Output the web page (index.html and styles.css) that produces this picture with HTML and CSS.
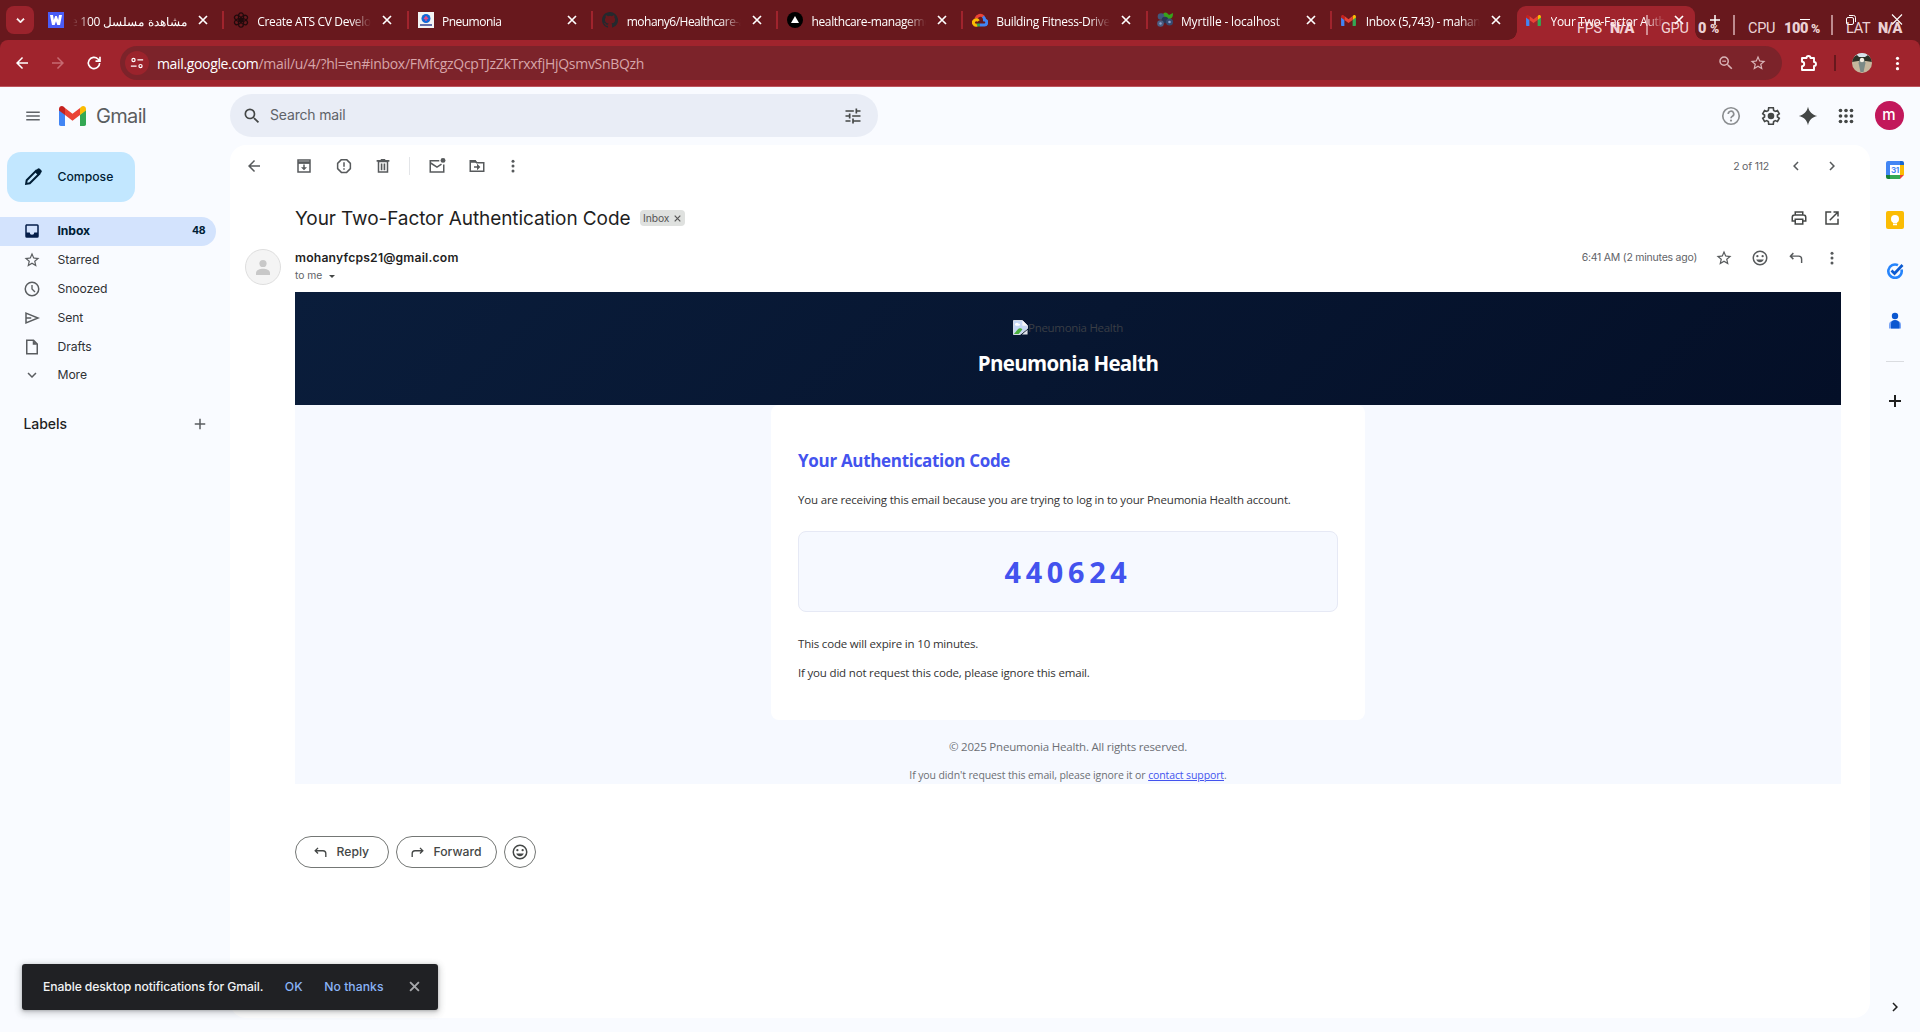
FILE: index.html
```html
<!DOCTYPE html>
<html lang="en">
<head>
<meta charset="utf-8">
<title>Your Two-Factor Authentication Code</title>
<link rel="stylesheet" href="styles.css">
</head>
<body>
<svg class="defs" width="0" height="0">
  <symbol id="close" viewBox="0 0 10 10"><path d="M1 1l8 8M9 1L1 9" fill="none" stroke="currentColor" stroke-width="1.7"/></symbol>
  <symbol id="back" viewBox="0 0 24 24"><path d="M20 11H7.83l5.59-5.59L12 4l-8 8 8 8 1.41-1.41L7.83 13H20v-2z"/></symbol>
  <symbol id="down" viewBox="0 0 24 24"><path d="M7.41 8.59L12 13.17l4.59-4.58L18 10l-6 6-6-6z"/></symbol>
  <symbol id="left" viewBox="0 0 24 24"><path d="M15.41 7.41L14 6l-6 6 6 6 1.41-1.41L10.83 12z"/></symbol>
  <symbol id="right" viewBox="0 0 24 24"><path d="M8.59 16.59L13.17 12 8.59 7.41 10 6l6 6-6 6z"/></symbol>
  <symbol id="plus" viewBox="0 0 24 24"><path d="M19 13h-6v6h-2v-6H5v-2h6V5h2v6h6z"/></symbol>
  <symbol id="dots" viewBox="0 0 24 24"><circle cx="12" cy="5.5" r="2"/><circle cx="12" cy="12" r="2"/><circle cx="12" cy="18.5" r="2"/></symbol>
  <symbol id="star" viewBox="0 0 24 24"><path d="M22 9.24l-7.19-.62L12 2 9.19 8.63 2 9.24l5.46 4.73L5.82 21 12 17.27 18.18 21l-1.63-7.03L22 9.24zM12 15.4l-3.76 2.27 1-4.28-3.32-2.88 4.38-.38L12 6.1l1.71 4.04 4.38.38-3.32 2.88 1 4.28L12 15.4z"/></symbol>
  <symbol id="search" viewBox="0 0 24 24"><path d="M15.5 14h-.79l-.28-.27A6.47 6.47 0 0 0 16 9.5 6.5 6.5 0 1 0 9.5 16c1.61 0 3.09-.59 4.23-1.57l.27.28v.79l5 4.99L20.49 19l-4.99-5zm-6 0C7.01 14 5 11.99 5 9.5S7.01 5 9.5 5 14 7.01 14 9.5 11.99 14 9.5 14z"/></symbol>
  <symbol id="smile" viewBox="0 0 24 24"><circle cx="12" cy="12" r="9" fill="none" stroke="currentColor" stroke-width="2"/><circle cx="8.5" cy="9.5" r="1.5"/><circle cx="15.5" cy="9.5" r="1.5"/><path d="M6.9 14h10.2c-.8 2-2.8 3.5-5.1 3.5S7.7 16 6.9 14z"/></symbol>
  <symbol id="reply" viewBox="0 0 24 24"><path d="M8.500 5.500L4.500 9.500l4 4M5 9.500h10.500a4 4 0 0 1 4 4V18.500" fill="none" stroke="currentColor" stroke-width="1.900"/></symbol>
  <symbol id="gmail" viewBox="0 0 54 40"><path d="M0 7v29.500C0 38.500 1.500 40 3.500 40H12V17z" fill="#4285f4"/><path d="M42 40h8.500c2 0 3.500-1.500 3.500-3.500V7L42 17z" fill="#34a853"/><path d="M42 4v14l12-9V6c0-5-5.500-7.500-9.500-4.500z" fill="#fbbc04"/><path d="M12 18V4l15 11.500L42 4v14L27 29.500z" fill="#ea4335"/><path d="M0 6v3l12 9V4L9.500 1.500C5.500-1.500 0 1 0 6z" fill="#c5221f"/></symbol>
</svg>

<div class="tabstrip">
  <span class="tab-search"><svg class="i14"><use href="#down"/></svg></span>
  <div class="tab"><svg class="fav" viewBox="0 0 16 16"><path d="M0 0h16v16H0z" fill="#4a5cf5"/><path d="M2 3h3l.8 5L7.200 4h1.600l1.400 4 .8-5h3l-2 10H9.300L8 9.200 6.700 13H4z" fill="#fff"/></svg><span class="title rtl" dir="rtl">مشاهدة مسلسل The 100</span><svg class="x"><use href="#close"/></svg></div>
  <div class="tab"><svg class="fav" viewBox="0 0 16 16"><g fill="none" stroke="#210a0c" stroke-width="1.200"><ellipse cx="8" cy="4.800" rx="2.600" ry="4"/><ellipse cx="8" cy="4.800" rx="2.600" ry="4" transform="rotate(60 8 8)"/><ellipse cx="8" cy="4.800" rx="2.600" ry="4" transform="rotate(120 8 8)"/><ellipse cx="8" cy="4.800" rx="2.600" ry="4" transform="rotate(180 8 8)"/><ellipse cx="8" cy="4.800" rx="2.600" ry="4" transform="rotate(240 8 8)"/><ellipse cx="8" cy="4.800" rx="2.600" ry="4" transform="rotate(300 8 8)"/></g></svg><span class="title">Create ATS CV Developer</span><svg class="x"><use href="#close"/></svg></div>
  <div class="tab"><svg class="fav" viewBox="0 0 16 16"><path d="M0 0h16v16H0z" fill="#f3f3f3"/><circle cx="8" cy="6.500" r="4.500" fill="#1268d8"/><path d="M8 4v5M6 7l2-2 2 2" stroke="#e54b8a" fill="none" stroke-width="1.400"/><path d="M2 13h12" stroke="#26368b" stroke-width="1.400"/></svg><span class="title tight">Pneumonia</span><svg class="x"><use href="#close"/></svg></div>
  <div class="tab"><svg class="fav" viewBox="0 0 16 16"><path fill="#24292e" d="M8 0C3.580 0 0 3.580 0 8c0 3.540 2.290 6.530 5.470 7.590.4.070.55-.17.55-.38v-1.490c-2.010.37-2.530-.49-2.690-.94-.09-.23-.48-.94-.82-1.130-.28-.15-.68-.52-.01-.53.63-.01 1.080.58 1.230.82.72 1.210 1.870.87 2.330.66.070-.52.28-.87.51-1.070-1.780-.2-3.640-.89-3.640-3.950 0-.87.31-1.590.82-2.150-.08-.2-.36-1.020.08-2.120 0 0 .67-.21 2.200.82a7.500 7.500 0 0 1 4 0c1.530-1.040 2.200-.82 2.200-.82.44 1.100.16 1.920.08 2.120.51.56.82 1.270.82 2.150 0 3.070-1.870 3.750-3.650 3.950.29.25.54.73.54 1.480v2.200c0 .21.15.46.55.38A8 8 0 0 0 8 0z"/></svg><span class="title tight">mohany6/Healthcare-app</span><svg class="x"><use href="#close"/></svg></div>
  <div class="tab"><svg class="fav" viewBox="0 0 16 16"><circle cx="8" cy="8" r="8" fill="#000"/><path d="M8 4l4 7H4z" fill="#fff"/></svg><span class="title snug">healthcare-management</span><svg class="x"><use href="#close"/></svg></div>
  <div class="tab"><svg class="fav" viewBox="0 0 16 16" fill="none" stroke-width="3"><path d="M4 6.500a4.500 4.500 0 0 1 7.500-1.800" stroke="#ea4335"/><path d="M11 4.500a4.500 4.500 0 0 1 1.500 3.500 2.500 2.500 0 0 1-.5 5H8" stroke="#4285f4"/><path d="M8 13H4.500" stroke="#34a853"/><path d="M5 13a2.600 2.600 0 0 1-2.500-4.500c1-1 3-1 4 .5" stroke="#fbbc04"/></svg><span class="title">Building Fitness-Driven</span><svg class="x"><use href="#close"/></svg></div>
  <div class="tab"><svg class="fav" viewBox="0 0 16 16"><path d="M6 3c0-3 3-3 4-2l2 2 4-2c0 4-1 6-5 6-3 0-5-1-5-4z" fill="#37a31b"/><circle cx="4" cy="4.500" r="3.300" fill="#40587c"/><circle cx="8" cy="8" r="3.300" fill="#293757"/><circle cx="3.500" cy="11.500" r="3.300" fill="#4b5e82"/><circle cx="12.500" cy="10" r="3.500" fill="#364a70"/><circle cx="12.500" cy="10" r="1.300" fill="#8ba2cc"/><circle cx="3.500" cy="11.500" r="1.200" fill="#8ba2cc"/></svg><span class="title loose">Myrtille - localhost</span><svg class="x"><use href="#close"/></svg></div>
  <div class="tab last"><svg class="fav mail"><use href="#gmail"/></svg><span class="title">Inbox (5,743) - mahanyy</span><svg class="x"><use href="#close"/></svg></div>
  <div class="tab active"><svg class="fav mail"><use href="#gmail"/></svg><span class="title">Your Two-Factor Authentic</span><svg class="x"><use href="#close"/></svg></div>
  <svg class="newtab" viewBox="0 0 12 12"><path d="M6 1v10M1 6h10" stroke="#fff" stroke-width="1.500"/></svg>
  <div class="winctl">
    <svg viewBox="0 0 12 12"><path d="M1 5.500h10" stroke="#fff"/></svg>
    <svg viewBox="0 0 12 12" fill="none" stroke="#fff"><rect x="1.500" y="3.500" width="7" height="7" rx="1.500"/><path d="M4 1.500h4.500a2 2 0 0 1 2 2V8"/></svg>
    <svg viewBox="0 0 12 12"><path d="M1 .5l10 10M11 .5l-10 10" stroke="#fff" stroke-width="1.100"/></svg>
  </div>
</div>

<div class="toolbar">
  <svg class="nav-b"><use href="#back"/></svg>
  <svg class="nav-b fwd"><use href="#back"/></svg>
  <svg class="nav-b" viewBox="0 0 24 24"><path d="M19.500 12a7.500 7.500 0 1 1-2.200-5.300L20 9.300M20 3.500v6h-6" fill="none" stroke="currentColor" stroke-width="2.200"/></svg>
  <div class="omnibox">
    <span class="site"><svg viewBox="0 0 16 16" fill="none" stroke="#fff" stroke-width="1.400"><circle cx="4" cy="4.500" r="1.800"/><path d="M8.500 4.500H15M1 11.500h6.500"/><circle cx="12" cy="11.500" r="1.800"/></svg></span>
    <span class="url"><b>mail.google.com</b>/mail/u/4/?hl=en#inbox/FMfcgzQcpTJzZkTrxxfjHjQsmvSnBQzh</span>
    <svg class="o-ic" viewBox="0 0 24 24"><use href="#search"/><path d="M7 8.800h5v1.600H7z"/></svg>
    <svg class="o-ic"><use href="#star"/></svg>
  </div>
  <svg class="ext" viewBox="0 0 18 18"><path d="M2 4h4.500a2 2 0 0 1 4 0H14v4a2 2 0 0 1 0 4v4H2v-3.800a2.200 2.200 0 0 0 0-4.400z" fill="none" stroke="#fff" stroke-width="1.900" stroke-linejoin="round"/></svg>
  <span class="tdiv"></span>
  <svg class="photo" viewBox="0 0 20 20"><clipPath id="ph"><circle cx="10" cy="10" r="10"/></clipPath><g clip-path="url(#ph)"><path d="M0 0h20v20H0z" fill="#c5b79d"/><path d="M0 0h20v4H0z" fill="#d7e2ea"/><path d="M0 4l5-2 2 2h6l3-2 4 2v5l-6-1H6L0 9z" fill="#2c3026"/><path d="M8 6h4l1.500 4-2 9h-3l-2-9z" fill="#7b8a86"/><circle cx="10" cy="7" r="2.200" fill="#f4efe2"/></g></svg>
  <svg class="menu3"><use href="#dots"/></svg>
</div>

<div class="page">
  <header class="header">
    <div class="brand">
      <svg class="burger" viewBox="0 0 24 24"><path d="M3 18h18v-2H3v2zm0-5h18v-2H3v2zm0-7v2h18V6H3z"/></svg>
      <svg class="logo"><use href="#gmail"/></svg>
      <span>Gmail</span>
    </div>
    <div class="searchbox">
      <svg><use href="#search"/></svg><span>Search mail</span>
      <svg viewBox="0 0 24 24"><path d="M3 17v2h6v-2H3zM3 5v2h10V5H3zm10 16v-2h8v-2h-8v-2h-2v6h2zM7 9v2H3v2h4v2h2V9H7zm14 4v-2H11v2h10zm-6-4h2V7h4V5h-4V3h-2v6z"/></svg>
    </div>
    <div class="actions">
      <span class="c40"><svg class="i22 dim" viewBox="0 0 24 24"><circle cx="12" cy="12" r="9" fill="none" stroke="currentColor" stroke-width="1.800"/><path d="M9 9.800a3 3 0 1 1 4.500 2.500c-1 .6-1.500 1.200-1.500 2.200" fill="none" stroke="currentColor" stroke-width="1.800"/><circle cx="12" cy="17" r="1.200"/></svg></span>
      <span class="c40"><svg class="i22" viewBox="0 0 24 24"><path fill="none" stroke="currentColor" stroke-width="1.800" d="M19 13c.04-.32.070-.64.070-1s-.03-.66-.07-1l2-1.500-2-3.500-2.400 1c-.52-.4-1.080-.73-1.690-.98L14.500 3h-5l-.4 3c-.61.25-1.170.59-1.690.98L5 6 3 9.500 5 11c-.04.32-.07.65-.07 1s.03.660.07 1l-2 1.500L5 18l2.400-1c.52.4 1.080.73 1.690.98l.4 3h5l.4-3c.61-.25 1.170-.59 1.690-.98L19 18l2-3.500z"/><circle cx="12" cy="12" r="3.600"/></svg></span>
      <span class="c34"><svg class="i22" viewBox="0 0 24 24"><path d="M12 2c1.200 5.500 4.500 8.800 10 10-5.500 1.200-8.800 4.500-10 10C10.800 16.500 7.500 13.200 2 12c5.500-1.200 8.800-4.500 10-10z"/></svg></span>
      <span class="c42"><svg class="i22" viewBox="0 0 24 24"><g id="dotrow"><circle cx="6" cy="6" r="2"/><circle cx="12" cy="6" r="2"/><circle cx="18" cy="6" r="2"/></g><use href="#dotrow" y="6"/><use href="#dotrow" y="12"/></svg></span>
      <span class="avatar">m</span>
    </div>
  </header>

  <div class="body">
    <aside class="sidebar">
      <div class="compose"><svg viewBox="0 0 24 24"><path d="M4.500 19.500l.6-4L15.500 5 19 8.500 8.500 18.900z" fill="none" stroke="currentColor" stroke-width="2.200"/><path d="M14 6.500L17 3c.8-.8 1.700-.7 2.400 0L21 4.600c.8.8.8 1.700 0 2.400l-3.300 3.300z"/></svg>Compose</div>
      <nav>
        <div class="item sel"><svg viewBox="0 0 24 24"><path fill-rule="evenodd" d="M5 3h14a2 2 0 0 1 2 2v14a2 2 0 0 1-2 2H5a2 2 0 0 1-2-2V5c0-1.100.9-2 2-2zm0 2v9h4a3 3 0 0 0 6 0h4V5z"/></svg><span>Inbox</span><em>48</em></div>
        <div class="item"><svg><use href="#star"/></svg>Starred</div>
        <div class="item"><svg viewBox="0 0 24 24"><circle cx="12" cy="12" r="9" fill="none" stroke="currentColor" stroke-width="2"/><path d="M12 6.500V12l4 4" fill="none" stroke="currentColor" stroke-width="1.800"/></svg>Snoozed</div>
        <div class="item"><svg viewBox="0 0 24 24"><path d="M4 5.500L20 12 4 18.500zM4 12h7" fill="none" stroke="currentColor" stroke-width="2"/></svg>Sent</div>
        <div class="item"><svg viewBox="0 0 24 24"><path d="M5 3h9l5 5v13H5z" fill="none" stroke="currentColor" stroke-width="2"/><path d="M13 3v6h6z"/></svg>Drafts</div>
        <div class="item more"><svg><use href="#down"/></svg>More</div>
      </nav>
      <div class="labels"><span>Labels</span><svg><use href="#plus"/></svg></div>
    </aside>

    <main class="panel">
      <div class="tools">
        <span class="c40 t-back"><svg class="i18"><use href="#back"/></svg></span>
        <span class="c40"><svg class="i18" viewBox="0 0 24 24"><path d="M4 8v12h16V8M4 8V4h16v4z" fill="none" stroke="currentColor" stroke-width="2"/><path d="M4 5.500h16V8.500H4zM11 10h2v3.500h3L12 17.500l-4-4h3z"/></svg></span>
        <span class="c40"><svg class="i18" viewBox="0 0 24 24"><path d="M8.500 3.500h7l5 5v7l-5 5h-7l-5-5v-7z" fill="none" stroke="currentColor" stroke-width="2" stroke-linejoin="round"/><path d="M11 7h2v6h-2zM11 15h2v2h-2z"/></svg></span>
        <span class="c38"><svg class="i18" viewBox="0 0 24 24"><path d="M6 6h12v14H6z" fill="none" stroke="currentColor" stroke-width="2"/><path d="M3.500 4H8.500l1-1.500h5l1 1.500h5v2.200h-17zM9 8.500h2.200v9H9zM12.800 8.500H15v9h-2.200z"/></svg></span>
        <span class="tools-div"></span>
        <span class="c42"><svg class="i18" viewBox="0 0 24 24"><path d="M15 5H3v15h18V10" fill="none" stroke="currentColor" stroke-width="2"/><path d="M3.500 8L12 13.500 18 9.500" fill="none" stroke="currentColor" stroke-width="2"/><circle cx="20" cy="4.500" r="3.300"/></svg></span>
        <span class="c38"><svg class="i18" viewBox="0 0 24 24"><path d="M3 5h6.500l2 2.500H21V19H3z" fill="none" stroke="currentColor" stroke-width="2"/><path d="M3 4h7l2 3.500H3zM8 12.200h4V9l4.500 4.200L12 17.500v-3.200H8z"/></svg></span>
        <span class="c34"><svg class="i18"><use href="#dots"/></svg></span>
        <span class="count">2 of 112</span>
        <span class="c36"><svg class="i18"><use href="#left"/></svg></span>
        <span class="c36"><svg class="i18"><use href="#right"/></svg></span>
      </div>
      <div class="subject">
        <h2>Your Two-Factor Authentication Code</h2>
        <span class="chip">Inbox<svg><use href="#close"/></svg></span>
        <span class="c36 push"><svg class="i18" viewBox="0 0 24 24"><path d="M7 8V4h10v4M7 16H3V11q0-3 3-3h12q3 0 3 3v5h-4M7 13.500h10V20H7z" fill="none" stroke="currentColor" stroke-width="2"/></svg></span>
        <span class="c36"><svg class="i18" viewBox="0 0 24 24"><path d="M11 4H4v16h16v-7M14 4h6v6M20 4L9 15" fill="none" stroke="currentColor" stroke-width="2"/></svg></span>
      </div>
      <div class="sender">
        <svg class="face" viewBox="0 0 36 36"><circle cx="18" cy="18" r="17.500" fill="#f4f4f4" stroke="#dedede"/><circle cx="18" cy="14.500" r="3.600" fill="#c8c8c8"/><path d="M11 26v-2c0-3 4-4.300 7-4.300s7 1.300 7 4.300v2z" fill="#c8c8c8"/></svg>
        <div class="from"><strong>mohanyfcps21@gmail.com</strong><span>to me<i></i></span></div>
        <div class="meta">
          <span class="time">6:41 AM (2 minutes ago)</span>
          <span class="c36"><svg class="i18"><use href="#star"/></svg></span>
          <span class="c36"><svg class="i18"><use href="#smile"/></svg></span>
          <span class="c36"><svg class="i18"><use href="#reply"/></svg></span>
          <span class="c36"><svg class="i18"><use href="#dots"/></svg></span>
        </div>
      </div>

      <article class="email">
        <div class="banner">
          <div class="alt"><svg viewBox="0 0 16 16"><path d="M.5.5H10l5.500 5.500V9l-8 6.500h-7z" fill="#c6d8f5" stroke="#dfe3ea"/><path d="M10 .5V6h5.500z" fill="#f7f7f7"/><path d="M2 5c0-2 3-3 4-1 2 0 2 2 0 2H3z" fill="#fff"/><path d="M1 15l4-5c2-2 4-1 5 0l-4 5z" fill="#4caf3c"/><path d="M15.500 10.500v5h-6z" fill="#dfe3ea"/></svg>Pneumonia Health</div>
          <h1>Pneumonia Health</h1>
        </div>
        <div class="card">
          <h3>Your Authentication Code</h3>
          <p>You are receiving this email because you are trying to log in to your Pneumonia Health account.</p>
          <div class="code">440624</div>
          <p>This code will expire in 10 minutes.</p>
          <p>If you did not request this code, please ignore this email.</p>
        </div>
        <footer>
          <p>© 2025 Pneumonia Health. All rights reserved.</p>
          <p class="small">If you didn't request this email, please ignore it or <a>contact support</a>.</p>
        </footer>
      </article>

      <div class="replies">
        <span class="pill"><svg><use href="#reply"/></svg>Reply</span>
        <span class="pill fw"><svg class="flip"><use href="#reply"/></svg>Forward</span>
        <span class="round"><svg><use href="#smile"/></svg></span>
      </div>
    </main>

    <aside class="apps">
      <svg viewBox="0 0 18 18"><path d="M0 2a2 2 0 0 1 2-2h12v4H4v10H0z" fill="#4285f4"/><path d="M14 0h2a2 2 0 0 1 2 2v2h-4z" fill="#1967d2"/><path d="M14 4h4v10h-4z" fill="#fbbc04"/><path d="M4 14h10v4H4z" fill="#34a853"/><path d="M0 14h4v4H2a2 2 0 0 1-2-2z" fill="#188038"/><path d="M14 14h4l-4 4z" fill="#ea4335"/><path d="M4 4h10v10H4z" fill="#fff"/><text x="9" y="12" text-anchor="middle" class="cal">31</text></svg>
      <svg viewBox="0 0 18 18"><rect width="18" height="18" rx="2" fill="#fbbc04"/><circle cx="9" cy="8" r="4" fill="#fff"/><path d="M7 11h4v1.500H7zM7 13h4v1.200H7z" fill="#fff"/></svg>
      <svg viewBox="0 0 18 18"><path d="M15.500 8.500A6.700 6.700 0 1 1 12 4.200" fill="none" stroke="#2684fc" stroke-width="2.600"/><path d="M5.500 9.500l3 3L16.500 4" fill="none" stroke="#0d5bd1" stroke-width="2.700"/></svg>
      <svg viewBox="0 0 18 18"><circle cx="9" cy="5" r="3.200" fill="#0b57d0"/><path d="M3 17.500V14q0-4 4-4h4q4 0 4 4v3.500z" fill="#79a4f5"/><path d="M5 17.500V13q0-4 4-4t4.500 4v4.500z" fill="#0b57d0"/></svg>
      <span class="rule"></span>
      <svg class="add" viewBox="0 0 18 18"><path d="M9 3v12M3 9h12" stroke="#1f1f1f" stroke-width="2"/></svg>
      <svg class="expand"><use href="#right"/></svg>
    </aside>
  </div>
</div>

<div class="toast"><span>Enable desktop notifications for Gmail.</span><b>OK</b><b class="no">No thanks</b><svg><use href="#close"/></svg></div>

<div class="hud">
  <span class="w33">FPS</span><b class="w36">N/A</b><i></i>
  <span class="w37">GPU</span><b class="w12">0</b><b class="w24 pc">%</b><i></i>
  <span class="w36">CPU</span><b class="w27">100</b><b class="w20 pc">%</b><i></i>
  <span class="w32">LAT</span><b>N/A</b>
</div>
</body>
</html>
```
FILE: styles.css
```css
* { box-sizing: border-box; }
body { margin: 0; width: 1920px; height: 1032px; overflow: hidden; position: relative; display: flex; flex-direction: column; background: linear-gradient(#68181d 60px, #f9fbff 60px); font-family: Inter, "Liberation Sans", sans-serif; font-size: 12.2px; color: #444746; }
svg { flex: none; display: block; }
svg:not([fill]) { fill: currentColor; }
.defs { position: absolute; }
h1, h2, h3, p { margin: 0; }

/* Browser frame */
.tabstrip { height: 40px; flex: none; display: flex; padding-left: 6px; padding-top: 6px; color: #fff; font-family: "Open Sans", "Noto Sans", sans-serif; }
.tab-search { width: 28px; height: 28px; border-radius: 8px; background: #9b232c; display: flex; align-items: center; justify-content: center; margin-right: 5px; }
.i14 { width: 15px; height: 15px; stroke: currentColor; }
.tab { width: 184.75px; flex: none; height: 28px; display: flex; align-items: center; padding-left: 9px; border: 0 solid transparent; border-right-width: 2px; border-image: linear-gradient(transparent 21%, #a0242d 21%, #a0242d 79%, transparent 79%) 1; }
.tab.last { border-image: none; }
.fav { width: 16px; height: 16px; }
.fav.mail { width: 15px; height: 11px; margin-right: 1px; }
.title { width: 114px; margin-left: 8.5px; padding-top: 2px; white-space: nowrap; overflow: hidden; font-size: 12px; letter-spacing: -.33px; line-height: 21px; mask-image: linear-gradient(90deg, #000 82%, transparent); }
.title.snug { letter-spacing: -.38px; }
.title.tight { letter-spacing: -.52px; }
.title.loose { letter-spacing: -.17px; }
.title.rtl { letter-spacing: -.2px; mask-image: linear-gradient(270deg, #000 85%, transparent); }
.x { width: 10px; height: 10px; margin-left: 11px; }
.tab.active { position: relative; width: 178px; height: 34px; padding-bottom: 6px; border: 0; border-radius: 9px 9px 0 0; background: #a0242d; }
.tab.active .title { letter-spacing: -.3px; }
.tab.active .x { margin-left: 9.5px; }
.tab.active::before, .tab.active::after { content: ""; position: absolute; bottom: 0; width: 9px; height: 9px; }
.tab.active::before { left: -9px; background: radial-gradient(circle at 0 0, transparent 8.5px, #a0242d 9px); }
.tab.active::after { right: -9px; background: radial-gradient(circle at 100% 0, transparent 8.5px, #a0242d 9px); }
.newtab { width: 12px; height: 12px; margin: 8px 0 0 14px; }
.winctl { display: flex; gap: 34px; margin: 8px 0 0 78px; }
.winctl svg { width: 12px; height: 12px; }

.toolbar { height: 47px; flex: none; background: #a0242d; border-bottom: 1px solid #bd555d; display: flex; align-items: center; color: #fff; padding-left: 13px; border-radius: 8px 8px 0 0; }
.nav-b { width: 18px; height: 18px; margin-right: 18px; }
.nav-b.fwd { transform: scaleX(-1); color: #c66a71; }
.nav-b:nth-child(3) { margin-right: 17px; }
.omnibox { width: 1662px; height: 34px; border-radius: 17px; background: #7c232a; display: flex; align-items: center; padding: 0 15px 0 5px; }
.site { width: 24px; height: 24px; border-radius: 50%; background: #9b232c; display: flex; align-items: center; justify-content: center; }
.site svg { width: 14px; height: 14px; }
.url { flex: 1; margin-left: 8px; font: 14px "Open Sans", "Noto Sans", sans-serif; letter-spacing: -.3px; color: #d7a5a9; }
.url b { font-weight: 400; color: #fff; letter-spacing: -.35px; }
.o-ic { width: 18px; height: 18px; margin-left: 14px; color: #d9b3b6; }
.ext { width: 18px; height: 18px; margin-left: 18px; }
.tdiv { width: 2px; height: 16px; background: #68181d; margin: 0 16px; }
.photo { width: 20px; height: 20px; }
.menu3 { width: 19px; height: 19px; margin-left: 16px; }

/* Mail header */
.page { flex: 1; display: flex; flex-direction: column; background: #f9fbff; }
.header { height: 58px; display: flex; padding: 7px 0 8px; }
.brand { width: 230px; display: flex; align-items: center; font-size: 20px; letter-spacing: -.67px; color: #5a5d60; padding: 0 0 0 23.5px; }
.burger { width: 18px; height: 18px; color: #5f6368; }
.logo { width: 27px; height: 20px; margin: 0 10px 0 17.5px; }
.brand span { padding-top: 1px; }
.searchbox { width: 648px; height: 43px; border-radius: 22px; background: #e9edf6; display: flex; align-items: center; padding: 0 15px 0 12px; font-size: 14px; letter-spacing: -.17px; color: #5f6368; }
.searchbox svg { width: 20px; height: 20px; color: #444746; }
.searchbox span { flex: 1; margin: 0 0 2px 8px; }
.actions { margin-left: auto; display: flex; align-items: center; padding-right: 9px; }
.c34, .c36, .c38, .c40, .c42 { display: flex; align-items: center; justify-content: center; flex: none; }
.c34 { width: 34px; } .c36 { width: 36px; } .c38 { width: 38px; } .c40 { width: 40px; } .c42 { width: 42px; }
.i22 { width: 22px; height: 22px; }
.i18 { width: 18px; height: 18px; }
.dim { color: #8b8e91; }
.avatar { width: 29px; height: 29px; border-radius: 50%; margin: 0 7.5px; background: #c2185b; color: #fff; font-size: 15px; font-weight: 500; line-height: 27px; text-align: center; }

/* Sidebar */
.body { display: flex; flex: 1; }
.sidebar { width: 230px; padding-top: 7px; color: #303235; letter-spacing: -.1px; }
.compose { width: 128px; height: 50px; margin-left: 7px; border-radius: 14px; background: #c2e7ff; color: #001d35; font-weight: 500; display: flex; align-items: center; padding: 0 0 1px 15px; letter-spacing: .02px; }
.compose svg { width: 22px; height: 22px; margin-right: 13.5px; }
nav { margin-top: 15px; }
.item { height: 29px; display: flex; align-items: center; padding: 0 0 2px 23px; width: 216px; }
.item svg { width: 18px; height: 18px; margin: 1px 16.5px 0 0; color: #5a5d60; }
.item.sel { background: #d3e3fd; border-radius: 0 15px 15px 0; font-weight: 700; color: #001d35; }
.item.sel svg { color: #041e49; }
.item em { margin-left: auto; margin-right: 11px; font: 700 10.5px Inter, sans-serif; letter-spacing: -.5px; }
.item.more { height: 27px; }
.labels { display: flex; align-items: center; justify-content: space-between; padding: 0 21px 0 23.5px; font-size: 14px; font-weight: 500; letter-spacing: -.05px; width: 230px; height: 20px; margin-top: 24px; color: #1f1f1f; }
.labels svg { width: 18px; height: 18px; margin-top: 1px; color: #5a5d60; }

/* Conversation */
.panel { width: 1640px; height: 873px; background: #fff; border-radius: 16px; }
.tools { height: 42px; display: flex; align-items: center; padding: 0 20px 0 4px; color: #575a5c; }
.t-back { margin-right: 10px; }
.tools-div { width: 1px; height: 18px; background: #e3e5e8; margin: 0 6px 0 7px; }
.count { margin-left: auto; margin-right: 9px; font-size: 10.5px; letter-spacing: -.2px; color: #5f6368; }
.subject { height: 62px; display: flex; align-items: center; padding: 0 20px 0 65px; color: #444746; }
.subject h2 { font-size: 19px; font-weight: 400; letter-spacing: -.09px; color: #1f1f1f; }
.chip { display: flex; align-items: center; height: 16px; width: 45px; margin-left: 9.5px; padding: 0 0 1px 3px; border-radius: 4px; background: #dfe1df; font-size: 10.3px; letter-spacing: -.05px; color: #555; }
.chip svg { width: 7px; height: 7px; margin-left: 5px; margin-top: 2px; }
.push { margin-left: auto; margin-right: -3px; }
.sender { height: 43px; display: flex; padding: 0 20px 0 15px; }
.face { width: 36px; height: 36px; }
.from { margin-left: 14px; display: flex; flex-direction: column; }
.from strong { font-size: 12.2px; line-height: 18px; letter-spacing: .18px; color: #1f1f1f; font-weight: 600; }
.from span { font-size: 10.3px; line-height: 17px; letter-spacing: -.05px; color: #5f6368; display: flex; align-items: center; }
.from i { border: 3.5px solid transparent; border-top-color: #444746; border-bottom: 0; margin: 1px 0 0 7px; }
.meta { margin-left: auto; display: flex; height: 18px; align-items: center; color: #575a5c; }
.time { font-size: 10.5px; letter-spacing: -.23px; margin: 0 9px 1px 0; color: #5f6368; }

/* Message body */
.email { margin-left: 65px; width: 1546px; height: 492px; background: #f6f9ff; font: 11.5px "Open Sans", "Noto Sans", sans-serif; }
.banner { height: 113px; background: linear-gradient(135deg, #0a1d3b, #040f27); display: flex; flex-direction: column; align-items: center; padding-top: 26px; }
.alt { display: flex; align-items: center; height: 18px; color: #3a3e45; letter-spacing: -.3px; }
.alt svg { width: 15px; height: 15px; }
.banner h1 { font-size: 20.5px; font-weight: 700; letter-spacing: -.65px; line-height: 28px; margin-top: 13px; color: #fff; }
.card { width: 594px; height: 315px; margin: 0 auto; background: #fff; border-radius: 8px; padding: 42px 27px 0; color: #333; }
.card h3 { font-size: 17px; font-weight: 700; letter-spacing: -.31px; line-height: 28px; color: #4353ee; }
.card p { line-height: 20px; letter-spacing: -.18px; margin-top: 15px; }
.code { height: 81px; margin: 21px 0 22px; border: 1px solid #e6e9f5; border-radius: 8px; background: #f6f9ff; font-size: 28.8px; font-weight: 700; letter-spacing: 4.7px; line-height: 79px; text-align: center; color: #4353ee; }
.card .code + p { margin-top: 0; }
.card .code + p + p { margin-top: 9px; }
footer { text-align: center; color: #6c6f74; letter-spacing: -.2px; padding-top: 17px; line-height: 20px; }
footer .small { font-size: 10.5px; letter-spacing: -.11px; margin-top: 8px; }
footer a { color: #4353ee; text-decoration: underline; }

.replies { display: flex; margin: 52px 0 0 65px; color: #444746; }
.pill { width: 94px; height: 32px; border: 1px solid #747775; border-radius: 16px; display: flex; align-items: center; padding: 0 0 1px 16px; font-weight: 500; margin-right: 7px; }
.pill svg { width: 17px; height: 17px; margin: 2px 7.5px 0 0; }
.pill.fw { width: 101px; padding-left: 12px; }
.flip { transform: scaleX(-1); }
.round { width: 32px; height: 32px; border: 1px solid #747775; border-radius: 50%; display: flex; align-items: center; justify-content: center; }
.round svg { width: 18px; height: 18px; }

/* Side apps */
.apps { width: 50px; display: flex; flex-direction: column; align-items: center; padding-top: 16px; }
.apps svg { width: 18px; height: 18px; margin-bottom: 32px; }
.cal { font: 700 8px Inter, sans-serif; letter-spacing: -.3px; fill: #4285f4; }
.apps .rule { width: 18px; height: 1px; background: #dadce0; margin-bottom: 30px; }
.apps .add { margin-bottom: auto; }
.apps .expand { color: #1f1f1f; margin-bottom: 16px; }

/* Overlays */
.toast { position: absolute; left: 22px; top: 964px; width: 416px; height: 46px; border-radius: 3px; background: #202124; color: #f1f3f4; display: flex; align-items: center; padding: 0 0 2px 21px; font-weight: 500; letter-spacing: -.11px; box-shadow: 0 2px 6px 2px rgba(60, 64, 67, .2), 0 1px 3px rgba(60, 64, 67, .3); }
.toast b { font-weight: 500; color: #8ab4f8; margin-left: 21.5px; letter-spacing: .05px; }
.toast svg { width: 11px; height: 11px; margin: 1px 0 0 25px; color: #a6a8ab; }
.hud { position: absolute; left: 1577px; top: 15px; height: 26px; z-index: 2; display: flex; align-items: center; font: 14.5px Roboto, sans-serif; letter-spacing: -.3px; color: rgba(255, 235, 236, .9); white-space: nowrap; }
.hud b { font-weight: 900; letter-spacing: -.4px; }
.hud i { width: 2px; height: 20px; background: rgba(235, 200, 203, .65); margin: -6px 13px 0 0; }
.hud .pc { font-size: 12.5px; }
.w12 { width: 12px; } .w20 { width: 20px; } .w24 { width: 23px; } .w27 { width: 27px; } .w32 { width: 32px; } .w33 { width: 33px; } .w36 { width: 36px; } .w37 { width: 37px; }
```
